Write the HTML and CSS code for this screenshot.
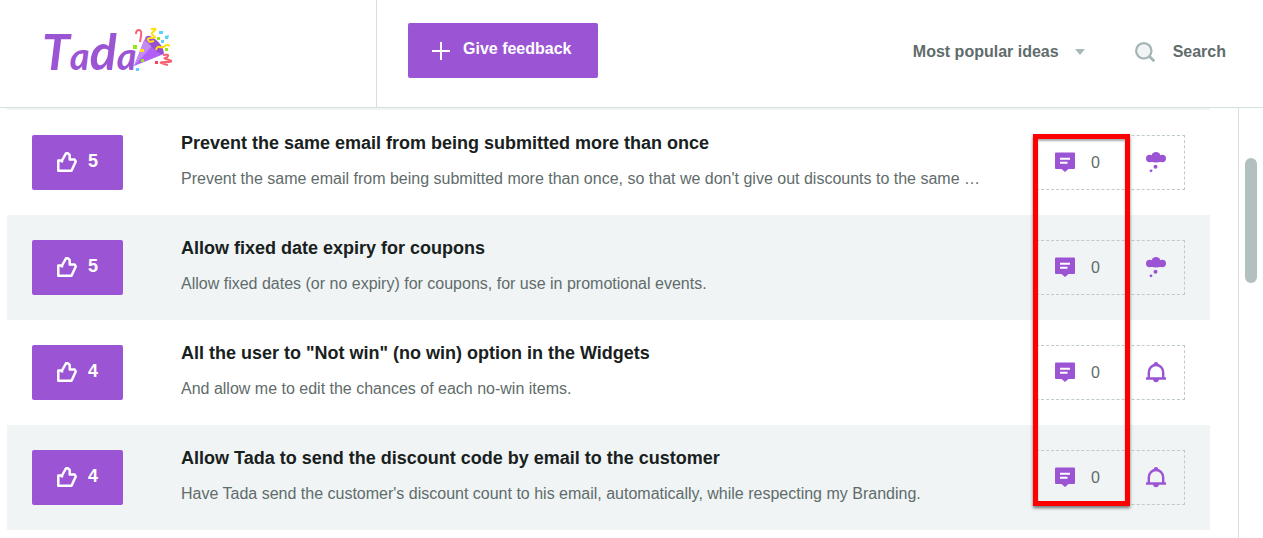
FILE: index.html
```html
<!DOCTYPE html>
<html lang="en">
<head>
<meta charset="utf-8">
<meta name="viewport" content="width=device-width, initial-scale=1">
<title>Tada feedback</title>
<link rel="stylesheet" href="styles.css">
</head>
<body>
<svg class="defs" aria-hidden="true">
  <symbol id="thumb" viewBox="0 0 20 20"><path d="M1.300 18.700V8.500H5L9 1.300h2L12.700 3v4.500h5L18.800 9.500 14.500 18.700z M5 8.500v2" fill="none" stroke="currentColor" stroke-width="2.500" stroke-linejoin="round"/></symbol>
  <symbol id="comment" viewBox="0 0 20 20"><path d="M1 0h18q1 0 1 1v14.500q0 1-1 1h-5.500L10 19.500 6.500 16.500H1q-1 0-1-1V1q0-1 1-1z" fill="currentColor"/><path d="M5 6.200h10M5 10.200h7.500" stroke="#fff" stroke-width="2"/></symbol>
  <symbol id="cloud" viewBox="0 0 20 21"><g fill="currentColor"><circle cx="10" cy="4.500" r="4.500"/><circle cx="3.700" cy="6.500" r="3.700"/><circle cx="16.300" cy="6.500" r="3.700"/><ellipse cx="10" cy="8" rx="6.500" ry="2.600"/><circle cx="9.500" cy="14.700" r="2"/><circle cx="5" cy="18.800" r="1.400"/></g></symbol>
  <symbol id="bell" viewBox="0 0 20 21"><path d="M2.800 16V10.500C2.800 6 6 3 10 3s7.200 3 7.200 7.500V16" fill="none" stroke="currentColor" stroke-width="2.400"/><path d="M0 15.300h20v2.400H13l-1 2q-2 .9-4 0l-1-2H0zM7.500 3l.6-2.300q1.900-1.400 3.800 0L12.500 3z" fill="currentColor"/></symbol>
</svg>
<header class="header">
  <a class="brand" href="#" aria-label="Tada">
    <svg class="logo" viewBox="0 0 130 70">
      <text class="wordmark" x="-1" y="46"><tspan class="cap">T</tspan><tspan class="low">a</tspan><tspan class="tall">d</tspan><tspan class="low">a</tspan></text>
      <path d="M103 12l18 18-30 12z" fill="#b15ff7"/><path d="M101 16L91 42l18-20z" fill="#c48bf2"/><path d="M103 14q1-5 9 1t9 14q-2 3-9-3t-9-12z" fill="#9450ce"/>
      <g fill="none" stroke-width="2"><path d="M97 18l1-6q1-6-2-6t-3 4" stroke="#fa6273"/><path d="M108 5q6-1 4 1t-3 3 2 3-3 2-1 4l4-1" stroke="#ffdf0e"/><path d="M113 26q1-4 4-3t5-1 5 0" stroke="#ffdf0e"/><path d="M120 31q6-1 5 1t-3 2 4 2-4 2 3 3" stroke="#fa6273"/></g>
      <path d="M116 7h4v3h-4zM122 12l4-1-1 4h-3zM118 16h3v3h-3zM93 44h3v3h-3z" fill="#5bd0ff"/><path d="M90 21h4v4h-4zM114 13h3v3h-3zM122 24h3v3h-3zM98 35h3v3h-3z" fill="#94e618"/><path d="M112 37h3v3h-3z" fill="#fa4558"/><path d="M97 25h4v3h-4z" fill="#ffdf0e"/>
    </svg>
  </a>
  <div class="toolbar">
    <button class="feedback" type="button">
      <svg width="18" height="18" viewBox="0 0 18 18" aria-hidden="true"><path d="M9 0v18M0 9h18" stroke="currentColor" stroke-width="2"/></svg>
      <span>Give feedback</span>
    </button>
    <div class="filters">
      <button class="sort" type="button">Most popular ideas <svg width="10" height="6" viewBox="0 0 10 6" aria-hidden="true"><path d="M0 0h10L5 6z" fill="#a7b9b8"/></svg></button>
      <button class="search" type="button"><svg width="20" height="20" viewBox="0 0 20 20" aria-hidden="true"><circle cx="8.800" cy="8.800" r="7.700" fill="#f0f4f4" stroke="#a3b5b4" stroke-width="2.200"/><path d="M14.300 14.300l5 5" stroke="#a3b5b4" stroke-width="2.700"/></svg>Search</button>
    </div>
  </div>
</header>
<main class="main">
  <div class="ideas">
    <article class="idea">
      <button class="vote" type="button" aria-label="Vote, 5 votes"><svg><use href="#thumb"/></svg>5</button>
      <div class="text"><h2>Prevent the same email from being submitted more than once</h2><p>Prevent the same email from being submitted more than once, so that we don't give out discounts to the same …</p></div>
      <div class="meta"><svg class="comment"><use href="#comment"/></svg><span class="count">0</span><svg><use href="#cloud"/></svg></div>
    </article>
    <article class="idea">
      <button class="vote" type="button" aria-label="Vote, 5 votes"><svg><use href="#thumb"/></svg>5</button>
      <div class="text"><h2>Allow fixed date expiry for coupons</h2><p>Allow fixed dates (or no expiry) for coupons, for use in promotional events.</p></div>
      <div class="meta"><svg class="comment"><use href="#comment"/></svg><span class="count">0</span><svg><use href="#cloud"/></svg></div>
    </article>
    <article class="idea">
      <button class="vote" type="button" aria-label="Vote, 4 votes"><svg><use href="#thumb"/></svg>4</button>
      <div class="text"><h2>All the user to "Not win" (no win) option in the Widgets</h2><p>And allow me to edit the chances of each no-win items.</p></div>
      <div class="meta"><svg class="comment"><use href="#comment"/></svg><span class="count">0</span><svg><use href="#bell"/></svg></div>
    </article>
    <article class="idea">
      <button class="vote" type="button" aria-label="Vote, 4 votes"><svg><use href="#thumb"/></svg>4</button>
      <div class="text"><h2>Allow Tada to send the discount code by email to the customer</h2><p>Have Tada send the customer's discount count to his email, automatically, while respecting my Branding.</p></div>
      <div class="meta"><svg class="comment"><use href="#comment"/></svg><span class="count">0</span><svg><use href="#bell"/></svg></div>
    </article>
    <div class="highlight"></div>
  </div>
  <div class="track"><div class="thumb"></div></div>
</main>
</body>
</html>
```
FILE: styles.css
```css
* { box-sizing: border-box; }
body {
  margin: 0;
  min-height: 100vh;
  display: flex;
  flex-direction: column;
  background: #fff;
  color: #5f6c6b;
  font-family: "Liberation Sans", Arial, sans-serif;
  font-size: 16px;
}
button { border: 0; padding: 0; background: none; color: inherit; font: inherit; font-weight: bold; cursor: pointer; }
svg { display: block; flex: none; }
.defs { position: absolute; width: 0; height: 0; }
.header { display: flex; height: 108px; border-bottom: 1px solid #d3e0de; }
.brand { flex: none; width: 377px; padding: 24px 0 0 43px; border-right: 1px solid #d3e0de; }
.logo { width: 130px; height: 70px; overflow: visible; }
.wordmark { fill: #9b55d4; font-family: Lato, sans-serif; font-weight: bold; font-style: italic; }
.cap { font-size: 50px; }
.low { font-size: 38px; }
.tall { font-size: 50px; }
.toolbar { flex: 1; display: flex; align-items: flex-start; justify-content: space-between; padding: 23px 37px 0 31px; }
.feedback {
  display: flex; align-items: center; gap: 13px;
  height: 55px; padding: 0 26px 0 24px;
  border-radius: 2px; background: #9b55d4; color: #fff;
}
.feedback span { padding-bottom: 3px; }
.filters { display: flex; align-items: center; gap: 50px; padding-top: 19px; }
.sort { display: flex; align-items: center; gap: 16px; }
.search { display: flex; align-items: center; gap: 18px; }
.main { flex: 1; display: flex; }
.ideas { position: relative; flex: 1; min-width: 0; margin: 0 28px 8px 7px; border-top: 2px solid #f0f4f5; }
.idea { display: flex; align-items: center; height: 105px; padding: 0 25px; }
.idea:nth-of-type(even) { background: #f0f4f5; }
.vote {
  flex: none; display: flex; align-items: center; gap: 11px;
  width: 91px; height: 55px; padding: 0 0 2px 25px;
  border-radius: 2px; background: #9b55d4; color: #fff; font-size: 18px;
}
.vote svg { width: 20px; height: 20px; }
.text { flex: 1; min-width: 0; margin: 0 40px 0 58px; padding-bottom: 5px; }
h2 { margin: 0 0 15px; color: #182120; font-size: 18px; line-height: 22px; }
.text p { margin: 0; overflow: hidden; white-space: nowrap; text-overflow: ellipsis; line-height: 20px; }
.meta { flex: none; display: flex; align-items: center; width: 149px; height: 55px; padding-left: 18px; border: 1px dashed #becbca; color: #9b55d4; }
.meta svg { width: 20px; height: 21px; }
.count { width: 71px; padding-left: 16px; color: #5f6c6b; }
.highlight {
  position: absolute; top: 24px; right: 80px; bottom: 24px; width: 97px;
  border: 5px solid #f00;
  box-shadow: 0 2px 3px #0008, inset 0 2px 2px #0005;
  pointer-events: none;
}
.track { flex: none; width: 25px; padding: 50px 6px 0; border-left: 1px solid #d3e0de; }
.thumb { width: 12px; height: 125px; border-radius: 6px; background: #b2c0bf; }
```
